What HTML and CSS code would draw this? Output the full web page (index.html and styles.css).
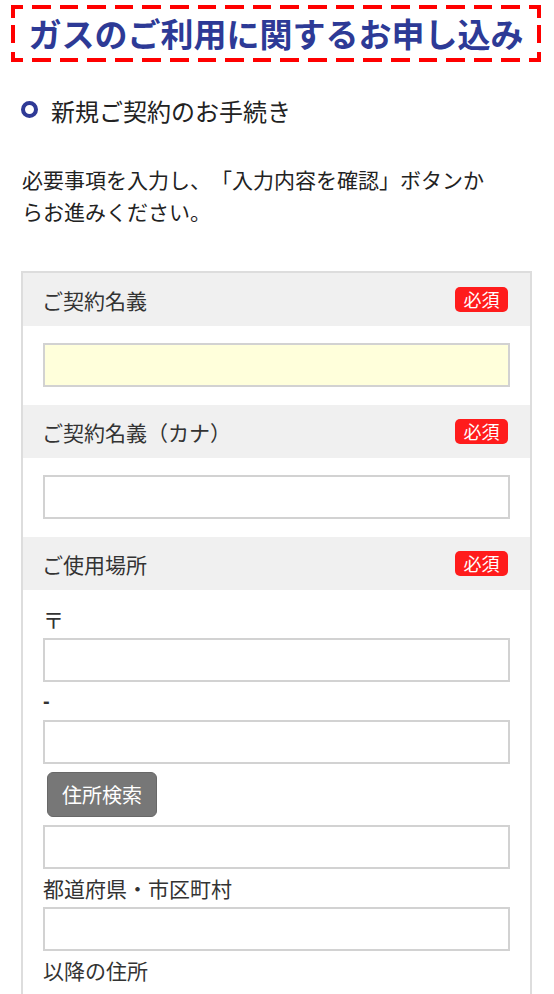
FILE: index.html
```html
<!DOCTYPE html>
<html lang="ja">
<head>
<meta charset="utf-8">
<title>ガスのご利用に関するお申し込み</title>
<link rel="stylesheet" href="styles.css">
</head>
<body>
<div class="page">
  <h1 class="title">ガスのご利用に関するお申し込み</h1>
  <h2 class="heading"><span class="ring"></span>新規ご契約のお手続き</h2>
  <p class="lead">必要事項を入力し、「入力内容を確認」ボタンからお進みください。</p>

  <div class="form">
    <div class="row-head"><span class="label">ご契約名義</span><span class="req">必須</span></div>
    <div class="row-body"><input class="field field-active" type="text"></div>

    <div class="row-head"><span class="label">ご契約名義（カナ）</span><span class="req">必須</span></div>
    <div class="row-body"><input class="field" type="text"></div>

    <div class="row-head"><span class="label">ご使用場所</span><span class="req">必須</span></div>
    <div class="row-body row-address">
      <div class="cap cap-first">〒</div>
      <input class="field" type="text">
      <div class="cap cap-dash">-</div>
      <input class="field" type="text">
      <button class="search" type="button">住所検索</button>
      <input class="field" type="text">
      <div class="cap">都道府県・市区町村</div>
      <input class="field" type="text">
      <div class="cap cap-last">以降の住所</div>
      <input class="field" type="text">
    </div>
  </div>
</div>
</body>
</html>
```

FILE: styles.css
```css
* {
  box-sizing: border-box;
}

html, body {
  margin: 0;
  padding: 0;
  background: #ffffff;
}

body {
  font-family: "Noto Sans CJK JP", "Noto Sans", sans-serif;
  color: #333333;
  text-spacing-trim: space-all;
}

.page {
  padding-top: 5px;
}

.title {
  margin: 0 13px 0 11px;
  height: 57px;
  padding: 4px;
  display: flex;
  align-items: center;
  justify-content: center;
  font-size: 33px;
  font-weight: 700;
  line-height: 1;
  color: #2d3a96;
  letter-spacing: 0;
  background-image:
    repeating-linear-gradient(90deg, #ff0000 0 12px, transparent 12px 21px, #ff0000 21px 27.61px),
    repeating-linear-gradient(90deg, #ff0000 0 12px, transparent 12px 21px, #ff0000 21px 27.61px),
    linear-gradient(180deg, #ff0000 0 13px, transparent 13px 20px, #ff0000 20px 38px, transparent 38px 47px, #ff0000 47px),
    linear-gradient(180deg, #ff0000 0 13px, transparent 13px 20px, #ff0000 20px 38px, transparent 38px 47px, #ff0000 47px);
  background-size: 100% 4px, 100% 4px, 4px 100%, 4px 100%;
  background-position: left top, left bottom, left top, right top;
  background-repeat: no-repeat;
}

.heading {
  margin: 32px 0 0 0;
  padding-left: 21px;
  display: flex;
  align-items: center;
  font-size: 24px;
  font-weight: 400;
  line-height: 34px;
  color: #222222;
}

.ring {
  width: 17px;
  height: 17px;
  border: 4px solid #2f3a96;
  border-radius: 50%;
  margin-right: 13px;
  margin-top: -3px;
  flex: none;
}

.lead {
  margin: 35px 0 0 0;
  padding-left: 22px;
  width: 494px;
  font-size: 21px;
  line-height: 32px;
  color: #222222;
}

.form {
  margin: 44px 22px 0 21px;
  border: 2px solid #dddddd;
  border-bottom: none;
}

.row-head {
  height: 53px;
  background: #f0f0f0;
  padding: 0 22px 0 19px;
  display: flex;
  align-items: center;
  justify-content: space-between;
}

.label {
  font-size: 21px;
  line-height: 30px;
  color: #333333;
}

.req {
  width: 53px;
  height: 25px;
  border-radius: 5px;
  background: #ff1c1c;
  color: #ffffff;
  font-size: 18px;
  line-height: 25px;
  text-align: center;
}

.row-body {
  padding: 17px 20px 18px 20px;
  display: flex;
  flex-direction: column;
  align-items: flex-start;
}

.row-address {
  padding-top: 14px;
  padding-bottom: 40px;
}

.field {
  display: block;
  width: 100%;
  height: 44px;
  margin: 0;
  padding: 0 8px;
  border: 2px solid #d2d2d2;
  border-radius: 0;
  background: #ffffff;
  font-family: inherit;
  font-size: 20px;
  outline: none;
  -webkit-appearance: none;
  appearance: none;
}

.field-active {
  background: #ffffdb;
}

.cap {
  margin: 4px 0;
  font-size: 21px;
  line-height: 30px;
  color: #333333;
}

.cap-first {
  margin-top: 0;
}

.cap-dash {
  font-family: "Liberation Sans", sans-serif;
  font-weight: 700;
  font-size: 20px;
}

.cap-last {
  margin-bottom: 14px;
}

.search {
  margin: 8px 0 8px 4px;
  width: 110px;
  height: 45px;
  padding: 0;
  border: 1px solid #686868;
  border-radius: 6px;
  background: #777777;
  color: #ffffff;
  font-family: inherit;
  font-size: 20px;
  line-height: 1;
}
```
